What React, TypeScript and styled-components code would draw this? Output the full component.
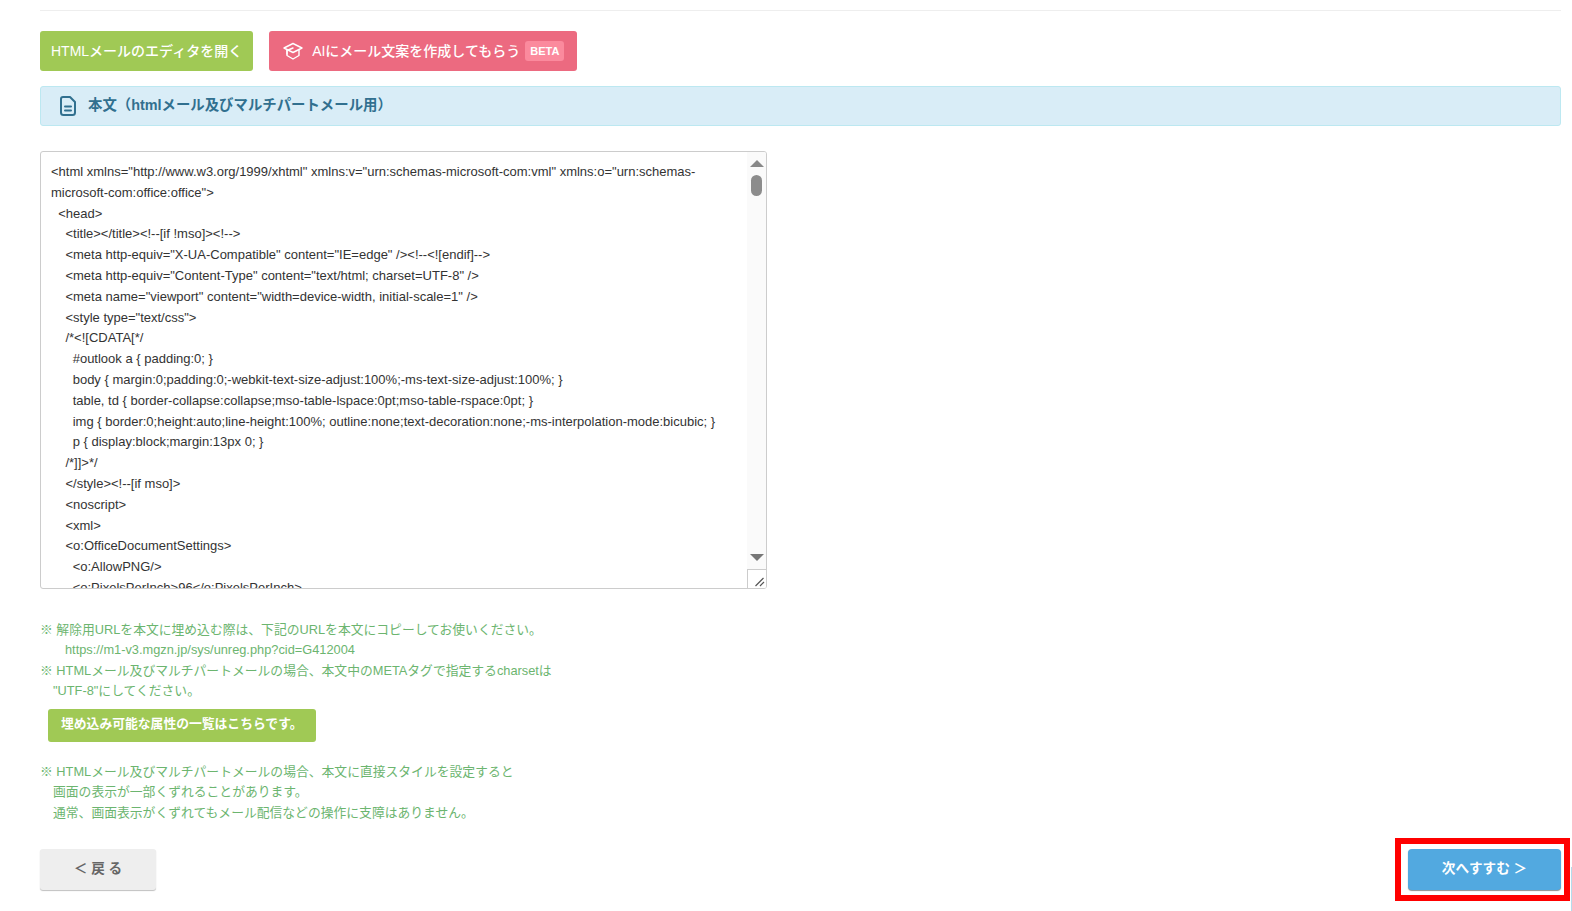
import styled, { createGlobalStyle } from "styled-components";

const codeText = `<html xmlns="http://www.w3.org/1999/xhtml" xmlns:v="urn:schemas-microsoft-com:vml" xmlns:o="urn:schemas-microsoft-com:office:office">
  <head>
    <title></title><!--[if !mso]><!-->
    <meta http-equiv="X-UA-Compatible" content="IE=edge" /><!--<![endif]-->
    <meta http-equiv="Content-Type" content="text/html; charset=UTF-8" />
    <meta name="viewport" content="width=device-width, initial-scale=1" />
    <style type="text/css">
    /*<![CDATA[*/
      #outlook a { padding:0; }
      body { margin:0;padding:0;-webkit-text-size-adjust:100%;-ms-text-size-adjust:100%; }
      table, td { border-collapse:collapse;mso-table-lspace:0pt;mso-table-rspace:0pt; }
      img { border:0;height:auto;line-height:100%; outline:none;text-decoration:none;-ms-interpolation-mode:bicubic; }
      p { display:block;margin:13px 0; }
    /*]]>*/
    </style><!--[if mso]>
    <noscript>
    <xml>
    <o:OfficeDocumentSettings>
      <o:AllowPNG/>
      <o:PixelsPerInch>96</o:PixelsPerInch>
    </o:OfficeDocumentSettings>`;

export default function App() {
  return (
    <>
      <GlobalStyle />
      <Page>
        <TopRule />
        <ActionRow>
          <ActionButton $color="#a0c955">HTMLメールのエディタを開く</ActionButton>
          <ActionButton $color="#ec6a80">
            <CapIcon />
            AIにメール文案を作成してもらう
            <BetaBadge>BETA</BetaBadge>
          </ActionButton>
        </ActionRow>
        <SectionHeading>
          <DocIcon />
          <HeadingText>本文（htmlメール及びマルチパートメール用）</HeadingText>
        </SectionHeading>
        <CodeBox>
          <CodePane>{codeText}</CodePane>
          <ScrollColumn>
            <ArrowUp />
            <Thumb />
            <ScrollSpacer />
            <ArrowDown />
            <ResizeCorner>
              <svg width="10" height="10" viewBox="0 0 10 10" fill="none" stroke="#555" strokeWidth="1.2">
                <path d="M0.5 9 L8.5 1 M5 9 L9 5" />
              </svg>
            </ResizeCorner>
          </ScrollColumn>
        </CodeBox>
        <NoteBlock>
          <p>※ 解除用URLを本文に埋め込む際は、下記のURLを本文にコピーしてお使いください。</p>
          <NoteUrl>https://m1-v3.mgzn.jp/sys/unreg.php?cid=G412004</NoteUrl>
          <p>※ HTMLメール及びマルチパートメールの場合、本文中のMETAタグで指定するcharsetは</p>
          <NoteIndent>"UTF-8"にしてください。</NoteIndent>
        </NoteBlock>
        <AttributeButton>埋め込み可能な属性の一覧はこちらです。</AttributeButton>
        <NoteBlock $top={20}>
          <p>※ HTMLメール及びマルチパートメールの場合、本文に直接スタイルを設定すると</p>
          <NoteIndent>画面の表示が一部くずれることがあります。</NoteIndent>
          <NoteIndent>通常、画面表示がくずれてもメール配信などの操作に支障はありません。</NoteIndent>
        </NoteBlock>
        <FooterRow>
          <BackButton>＜ 戻 る</BackButton>
          <NextWrap>
            <NextButton>次へすすむ ＞</NextButton>
            <Highlight />
          </NextWrap>
        </FooterRow>
      </Page>
      <EdgeLine />
    </>
  );
}

function CapIcon() {
  return (
    <svg width="22" height="20" viewBox="0 0 22 20" fill="none" stroke="#fff" strokeWidth="1.4" strokeLinejoin="round" strokeLinecap="round">
      <path d="M11 2.5 L20 7 L11 11.5 L2 7 Z" />
      <path d="M5 9 V14.5 L11 18 L17 14.5 V9" />
      <path d="M11 7 L5 9.5 V13" />
    </svg>
  );
}

function DocIcon() {
  return (
    <svg width="16" height="20" viewBox="0 0 16 20" fill="none" stroke="#31708f" strokeWidth="2" strokeLinejoin="round" strokeLinecap="round">
      <path d="M3 1 H10 L15 6 V16.5 A2.5 2.5 0 0 1 12.5 19 H3.5 A2.5 2.5 0 0 1 1 16.5 V3 A2 2 0 0 1 3 1 Z" />
      <path d="M5 10.5 H11 M5 14.5 H11" />
    </svg>
  );
}

const GlobalStyle = createGlobalStyle`
  html, body {
    margin: 0;
    height: 911px;
    overflow: hidden;
    background: #fff;
  }
  body {
    font-family: "Liberation Sans", "Noto Sans CJK JP", Arial, sans-serif;
    font-size: 14px;
    color: #333;
  }
`;

const Page = styled.div`
  padding: 10px 11px 0 40px;
`;

const TopRule = styled.div`
  height: 1px;
  background: #eeeeee;
`;

const ActionRow = styled.div`
  display: flex;
  gap: 16px;
  margin-top: 20px;
`;

const ActionButton = styled.div<{ $color: string }>`
  display: flex;
  align-items: center;
  height: 40px;
  padding: 0 11px 2px;
  box-sizing: border-box;
  border-radius: 3px;
  background: ${(p) => p.$color};
  color: #fff;
  font-size: 14px;
  font-weight: 500;

  svg {
    margin: 2px 8px 0 2px;
    flex: none;
  }
`;

const BetaBadge = styled.span`
  display: inline-block;
  margin: 2px 2px 0 5px;
  padding: 0 5px;
  height: 20px;
  line-height: 20px;
  border-radius: 3px;
  background: #fb8a9d;
  font-size: 11px;
  font-weight: 700;
`;

const SectionHeading = styled.div`
  display: flex;
  align-items: center;
  gap: 12px;
  height: 40px;
  box-sizing: border-box;
  margin-top: 15px;
  padding: 0 19px;
  border: 1px solid #bce8f1;
  border-radius: 3px;
  background: #d9edf7;
  color: #31708f;
  font-weight: 700;
`;

const HeadingText = styled.span`
  font-size: 14.4px;
  margin-bottom: 6px;
`;

const CodeBox = styled.div`
  display: flex;
  width: 727px;
  height: 438px;
  box-sizing: border-box;
  margin-top: 25px;
  border: 1px solid #ccc;
  border-radius: 3px;
  overflow: hidden;
`;

const CodePane = styled.div`
  flex: 1;
  min-width: 0;
  padding: 10px 10px 0;
  overflow: hidden;
  white-space: pre-wrap;
  font-size: 13px;
  line-height: 20.8px;
  color: #333;
`;

const ScrollColumn = styled.div`
  display: flex;
  flex-direction: column;
  align-items: center;
  flex: none;
  width: 19px;
  background: #fafafa;
`;

const ArrowUp = styled.div`
  margin-top: 8px;
  border-left: 7px solid transparent;
  border-right: 7px solid transparent;
  border-bottom: 7px solid #888;
`;

const ArrowDown = styled.div`
  margin-bottom: 8px;
  border-left: 7px solid transparent;
  border-right: 7px solid transparent;
  border-top: 7px solid #777;
`;

const Thumb = styled.div`
  width: 11px;
  height: 21px;
  margin-top: 8px;
  border-radius: 6px;
  background: #8c8c8c;
`;

const ScrollSpacer = styled.div`
  flex: 1;
`;

const ResizeCorner = styled.div`
  display: flex;
  align-items: flex-end;
  justify-content: flex-end;
  box-sizing: border-box;
  width: 100%;
  height: 19px;
  border-top: 1px solid #ccc;
  border-left: 1px solid #ccc;
  background: #fff;
  padding: 0 1px 1px 0;
`;

const NoteBlock = styled.div<{ $top?: number }>`
  margin-top: ${(p) => p.$top ?? 31}px;
  color: #6cb56f;
  font-size: 12.8px;
  line-height: 20.3px;

  p {
    margin: 0;
  }
`;

const NoteUrl = styled.p`
  padding-left: 25px;
`;

const NoteIndent = styled.p`
  padding-left: 13px;
`;

const AttributeButton = styled.div`
  display: flex;
  align-items: center;
  width: 268px;
  height: 33px;
  box-sizing: border-box;
  margin: 8px 0 0 8px;
  padding: 0 0 7px 13px;
  border-radius: 3px;
  background: #a0c955;
  color: #fff;
  font-size: 12.8px;
  font-weight: 700;
`;

const FooterRow = styled.div`
  display: flex;
  justify-content: space-between;
  margin-top: 26px;
`;

const BackButton = styled.div`
  display: flex;
  align-items: center;
  justify-content: center;
  width: 116px;
  height: 41px;
  padding-bottom: 5px;
  box-sizing: border-box;
  border-radius: 3px;
  background: #eeeeee;
  box-shadow: 0 1px 1px rgba(0, 0, 0, 0.25);
  color: #666;
  font-size: 13.6px;
  font-weight: 700;
`;

const NextWrap = styled.div`
  position: relative;
`;

const NextButton = styled.div`
  display: flex;
  align-items: center;
  justify-content: center;
  width: 153px;
  height: 41px;
  padding-bottom: 5px;
  box-sizing: border-box;
  border-radius: 4px;
  background: #52a9e0;
  box-shadow: 0 1px 1px rgba(0, 0, 0, 0.45);
  color: #fff;
  font-size: 13.6px;
  font-weight: 700;
`;

const Highlight = styled.div`
  position: absolute;
  inset: -11px -9px -11px -13px;
  border: 6px solid #ff0000;
  pointer-events: none;
`;

const EdgeLine = styled.div`
  position: absolute;
  right: 0;
  top: 867px;
  bottom: 0;
  width: 1px;
  background: #b5dcec;
`;
